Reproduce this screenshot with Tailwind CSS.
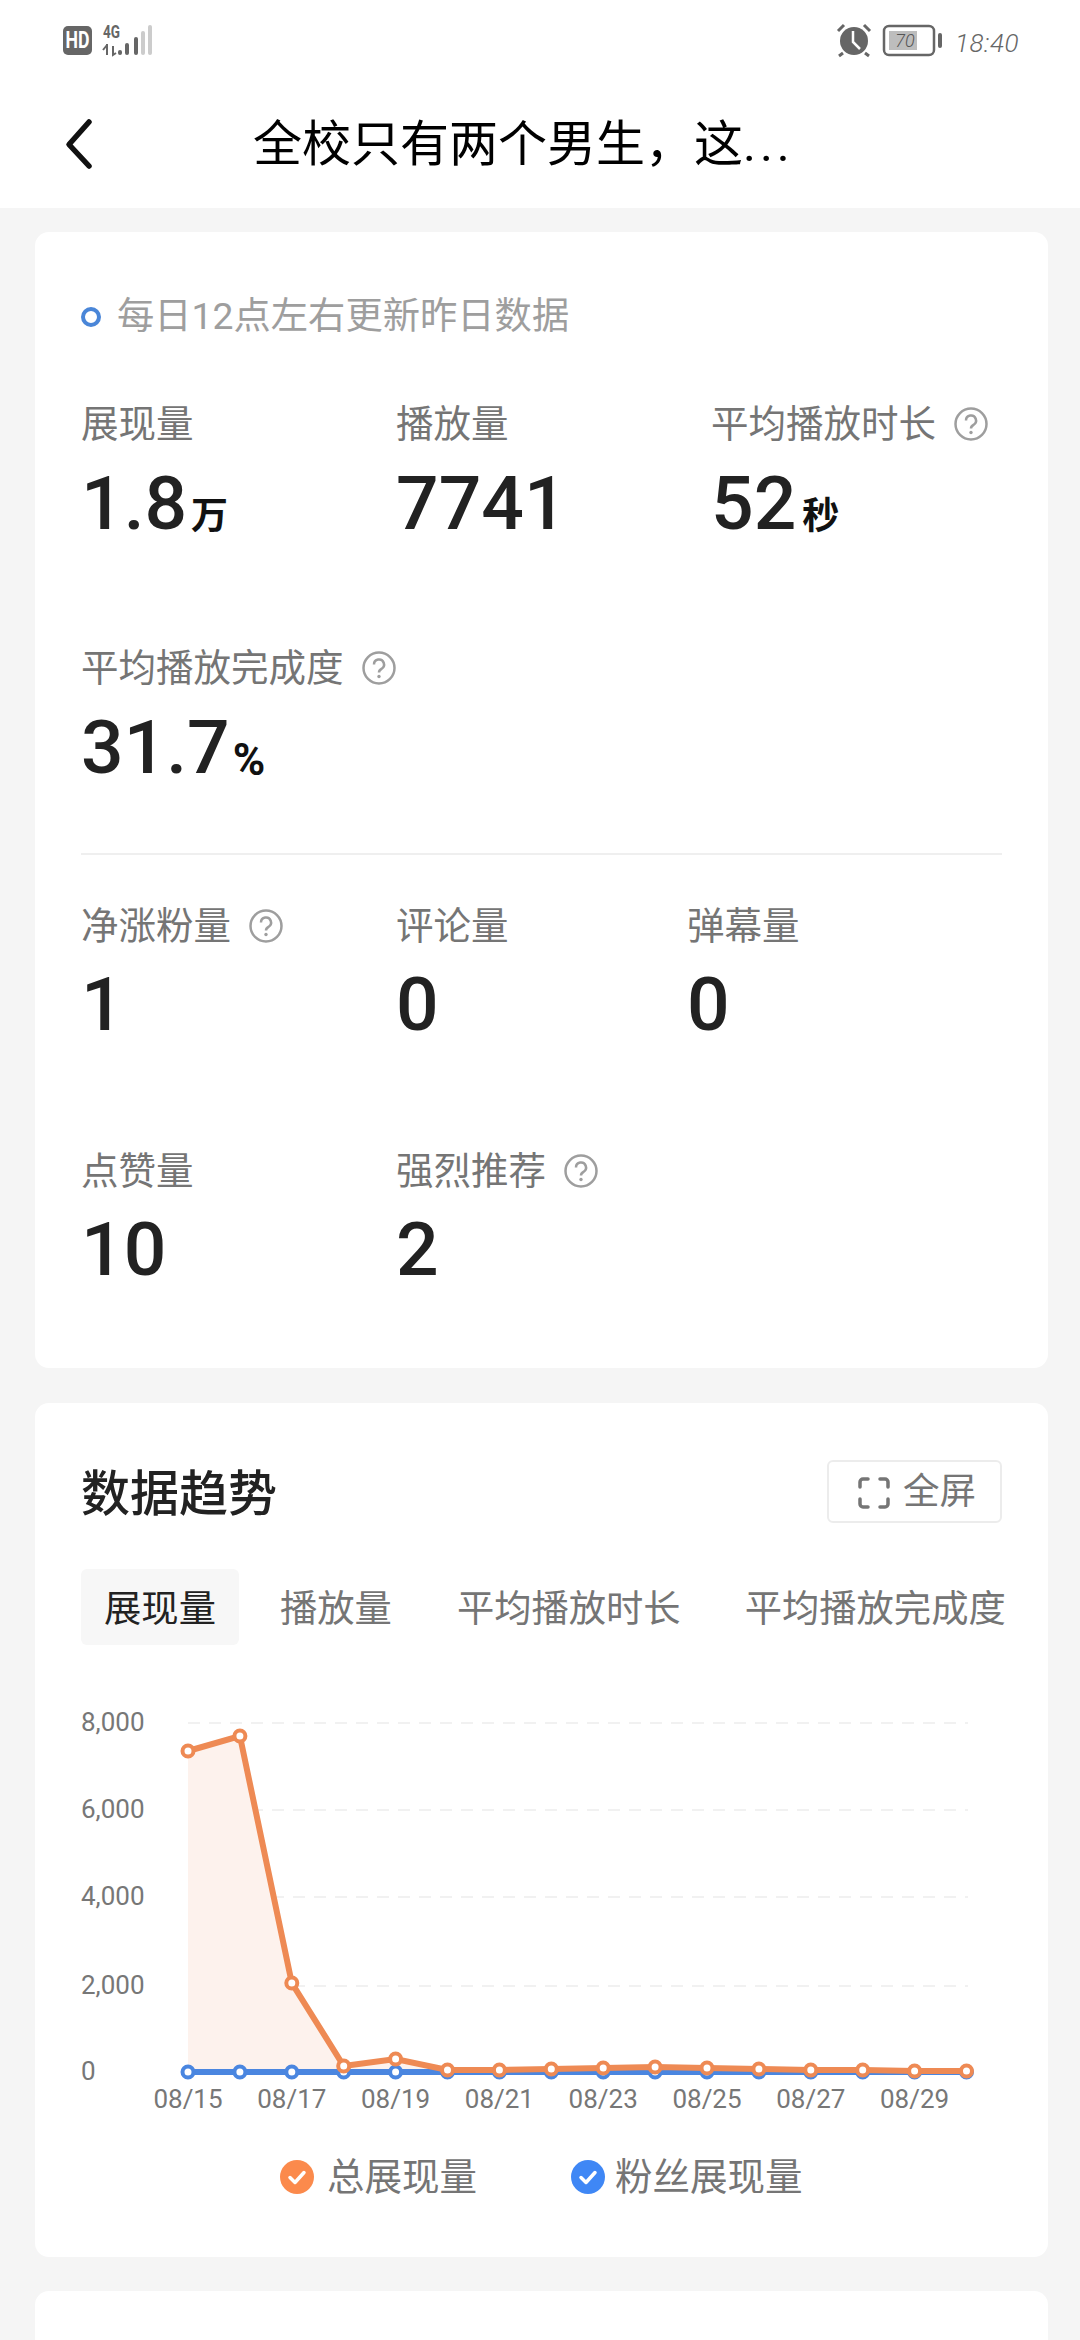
<!DOCTYPE html>
<html lang="zh-CN">
<head>
    <meta charset="UTF-8">
    <meta name="viewport" content="width=device-width, initial-scale=1.0">
    <title>数据详情</title>
    <script src="https://cdn.jsdelivr.net/npm/@tailwindcss/browser@4"></script>
</head>
<body class="bg-[#f5f5f5] font-['Roboto','Noto_Sans_CJK_SC',sans-serif]">
    <div class="w-[1080px] h-[2340px] overflow-hidden">
        <!-- Status bar and title -->
        <header class="bg-white h-[208px] relative">
            <svg class="absolute left-0 top-0" width="1080" height="70" viewBox="0 0 1080 70">
                <rect x="63" y="26" width="29" height="29" rx="5" fill="#666"/>
                <text x="65.500" y="48" font-size="23" font-weight="700" fill="#fff" textLength="24" lengthAdjust="spacingAndGlyphs" font-family="Roboto">HD</text>
                <text x="103" y="38" font-size="18" font-weight="700" fill="#666" textLength="17" lengthAdjust="spacingAndGlyphs" font-family="Roboto">4G</text>
                <path d="M107 44v11M103 50l4-5M113 46v9l3-2" stroke="#666" stroke-width="2" fill="none"/>
                <rect x="118" y="50" width="4" height="5" rx="2" fill="#666"/>
                <rect x="125" y="43" width="4" height="12" rx="2" fill="#666"/>
                <rect x="134" y="37" width="4" height="18" rx="2" fill="#666"/>
                <rect x="141" y="31" width="4" height="24" rx="2" fill="#ccc"/>
                <rect x="148" y="25" width="4" height="30" rx="2" fill="#ccc"/>
                <!-- alarm -->
                <circle cx="854" cy="41" r="14" fill="#666"/>
                <path d="M853 31v11l7 7" stroke="#fff" stroke-width="2.500" fill="none"/>
                <path d="M838 31l6-6M870 31l-6-6M843 53l-4 3M865 53l4 3" stroke="#666" stroke-width="3" fill="none"/>
                <!-- battery -->
                <rect x="884" y="26" width="50" height="29" rx="5" fill="none" stroke="#666" stroke-width="2.500"/>
                <rect x="889" y="31" width="28" height="19" fill="#bdbdbd"/>
                <rect x="938" y="33" width="4" height="15" rx="2" fill="#666"/>
                <text x="905" y="47" font-size="18" font-style="italic" font-weight="300" fill="#555" text-anchor="middle" font-family="Roboto">70</text>
                <text x="955" y="52" font-size="26" font-style="italic" font-weight="300" letter-spacing="0.500" fill="#666" font-family="Roboto">18:40</text>
            </svg>
            <svg class="absolute left-[60px] top-[115px]" width="40" height="60" viewBox="0 0 40 60">
                <path d="M29 7L9 29.500L29 51" stroke="#111" stroke-width="5.500" stroke-linecap="round" stroke-linejoin="round" fill="none"/>
            </svg>
            <h1 class="absolute left-[253px] top-[110px] text-[49px] leading-[70px] text-black font-normal whitespace-nowrap">全校只有两个男生，这<span class="tracking-[4px]">...</span></h1>
        </header>

        <main class="pl-[35px] pr-[32px]">
            <!-- Overview card -->
            <section class="mt-[24px] h-[1136px] bg-white rounded-[14px] pl-[46px] pr-[46px] pt-[60px]">
                <div class="flex items-center h-[50px] gap-[16px]">
                    <span class="w-[20px] h-[20px] rounded-full border-[4px] border-[#4a86d8]"></span>
                    <span class="text-[37.3px] text-[#9e9e9e]">每日12点左右更新昨日数据</span>
                </div>
                <div class="mt-[57px] grid grid-cols-[315px_315px_1fr] gap-y-[88px]">
                    <div>
                        <div class="h-[50px] flex items-center text-[37.5px] text-[#757575]">展现量</div>
                        <div class="h-[106px] pt-[3px] flex items-center gap-[4px] text-[#222]"><span class="text-[75px] font-medium">1.8</span><span class="text-[37px] font-bold mt-[26px] text-[#111]">万</span></div>
                    </div>
                    <div>
                        <div class="h-[50px] flex items-center text-[37.5px] text-[#757575]">播放量</div>
                        <div class="h-[106px] pt-[3px] flex items-center text-[75px] font-medium text-[#222]">7741</div>
                    </div>
                    <div>
                        <div class="h-[50px] flex items-center gap-[17px] text-[37.5px] text-[#757575]">平均播放时长
                            <svg width="36" height="36" viewBox="0 0 36 36"><circle cx="18" cy="18" r="15.500" fill="none" stroke="#9e9e9e" stroke-width="2.500"/><path d="M13 14.500a5 5 0 1 1 7.500 4.300c-1.800 1-2.500 1.700-2.500 3.700" fill="none" stroke="#9e9e9e" stroke-width="2.500"/><circle cx="18" cy="26.500" r="1.700" fill="#9e9e9e"/></svg>
                        </div>
                        <div class="h-[106px] pt-[3px] flex items-center gap-[6px] text-[#222]"><span class="text-[75px] font-medium">52</span><span class="text-[37px] font-bold mt-[26px] text-[#111]">秒</span></div>
                    </div>
                    <div class="col-span-3">
                        <div class="h-[50px] flex items-center gap-[17px] text-[37.5px] text-[#757575]">平均播放完成度
                            <svg width="36" height="36" viewBox="0 0 36 36"><circle cx="18" cy="18" r="15.500" fill="none" stroke="#9e9e9e" stroke-width="2.500"/><path d="M13 14.500a5 5 0 1 1 7.500 4.300c-1.800 1-2.500 1.700-2.500 3.700" fill="none" stroke="#9e9e9e" stroke-width="2.500"/><circle cx="18" cy="26.500" r="1.700" fill="#9e9e9e"/></svg>
                        </div>
                        <div class="h-[106px] pt-[3px] flex items-center gap-[3px] text-[#222]"><span class="text-[75px] font-medium">31.7</span><span class="text-[44px] font-bold mt-[25px] text-[#111]">%</span></div>
                    </div>
                </div>
                <div class="mt-[54px] border-t-2 border-[#efefef]"></div>
                <div class="mt-[46px] grid grid-cols-[315px_291px_1fr] gap-y-[91px]">
                    <div>
                        <div class="h-[50px] flex items-center gap-[17px] text-[37.5px] text-[#757575]">净涨粉量
                            <svg width="36" height="36" viewBox="0 0 36 36"><circle cx="18" cy="18" r="15.500" fill="none" stroke="#9e9e9e" stroke-width="2.500"/><path d="M13 14.500a5 5 0 1 1 7.500 4.300c-1.800 1-2.500 1.700-2.500 3.700" fill="none" stroke="#9e9e9e" stroke-width="2.500"/><circle cx="18" cy="26.500" r="1.700" fill="#9e9e9e"/></svg>
                        </div>
                        <div class="h-[104px] pt-[3px] flex items-center text-[75px] font-medium text-[#222]">1</div>
                    </div>
                    <div>
                        <div class="h-[50px] flex items-center text-[37.5px] text-[#757575]">评论量</div>
                        <div class="h-[104px] pt-[3px] flex items-center text-[75px] font-medium text-[#222]">0</div>
                    </div>
                    <div>
                        <div class="h-[50px] flex items-center text-[37.5px] text-[#757575]">弹幕量</div>
                        <div class="h-[104px] pt-[3px] flex items-center text-[75px] font-medium text-[#222]">0</div>
                    </div>
                    <div>
                        <div class="h-[50px] flex items-center text-[37.5px] text-[#757575]">点赞量</div>
                        <div class="h-[104px] pt-[3px] flex items-center text-[75px] font-medium text-[#222]">10</div>
                    </div>
                    <div class="col-span-2">
                        <div class="h-[50px] flex items-center gap-[17px] text-[37.5px] text-[#757575]">强烈推荐
                            <svg width="36" height="36" viewBox="0 0 36 36"><circle cx="18" cy="18" r="15.500" fill="none" stroke="#9e9e9e" stroke-width="2.500"/><path d="M13 14.500a5 5 0 1 1 7.500 4.300c-1.800 1-2.500 1.700-2.500 3.700" fill="none" stroke="#9e9e9e" stroke-width="2.500"/><circle cx="18" cy="26.500" r="1.700" fill="#9e9e9e"/></svg>
                        </div>
                        <div class="h-[104px] pt-[3px] flex items-center text-[75px] font-medium text-[#222]">2</div>
                    </div>
                </div>
            </section>

            <!-- Trend card -->
            <section class="mt-[35px] h-[854px] bg-white rounded-[14px] pt-[57px]">
                <div class="flex items-center justify-between h-[63px] pl-[46px] pr-[46px]">
                    <h2 class="text-[49px] font-medium text-[#222] pt-[6px]">数据趋势</h2>
                    <div class="w-[175px] h-[63px] flex items-center gap-[12px] pl-[28px] border-2 border-[#ececec] rounded-[6px] text-[36.5px] text-[#757575] pt-[2px]">
                        <svg width="34" height="34" viewBox="0 0 34 34"><path d="M11 3H6a3 3 0 0 0-3 3v5M23 3h5a3 3 0 0 1 3 3v5M11 31H6a3 3 0 0 1-3-3v-5M23 31h5a3 3 0 0 0 3-3v-5" fill="none" stroke="#757575" stroke-width="3.500" stroke-linecap="round"/></svg>
                        全屏
                    </div>
                </div>
                <div class="mt-[46px] ml-[46px] flex items-center h-[76px] text-[37.3px] text-[#757575] whitespace-nowrap">
                    <div class="w-[158px] h-[76px] flex items-center justify-center rounded-[6px] bg-[#f7f7f7] text-[#222] pt-[6px]">展现量</div>
                    <div class="ml-[41px] pt-[6px]">播放量</div>
                    <div class="ml-[65px] pt-[6px]">平均播放时长</div>
                    <div class="ml-[64px] pt-[6px]">平均播放完成度</div>
                </div>
                <svg id="chart" class="mt-[45px] block" width="1013" height="440" viewBox="35 1690 1013 440"></svg>
                <div class="mt-[22px] h-[50px] flex items-center text-[37.5px] text-[#757575]">
                    <svg class="ml-[245px]" width="34" height="34" viewBox="0 0 34 34"><circle cx="17" cy="17" r="17" fill="#fb8a4c"/><path d="M10 17.500l5 5 9-10" fill="none" stroke="#fff" stroke-width="3.500" stroke-linecap="round" stroke-linejoin="round"/></svg>
                    <span class="ml-[13px]">总展现量</span>
                    <svg class="ml-[94px]" width="34" height="34" viewBox="0 0 34 34"><circle cx="17" cy="17" r="17" fill="#3f87f5"/><path d="M10 17.500l5 5 9-10" fill="none" stroke="#fff" stroke-width="3.500" stroke-linecap="round" stroke-linejoin="round"/></svg>
                    <span class="ml-[10px]">粉丝展现量</span>
                </div>
            </section>

            <!-- Next card, cut off by the screen -->
            <section class="mt-[34px] h-[120px] bg-white rounded-[14px]"></section>
        </main>
    </div>

    <script>
        const NS = 'http://www.w3.org/2000/svg';
        const chart = document.getElementById('chart');

        function add(tag, attrs, text) {
            const el = document.createElementNS(NS, tag);
            for (const k in attrs) el.setAttribute(k, attrs[k]);
            if (text) el.textContent = text;
            chart.appendChild(el);
            return el;
        }

        const xAt = i => 188 + i * 51.9;
        const orange = [1751, 1736, 1983, 2066, 2059, 2070, 2070, 2069, 2068, 2067, 2068, 2069, 2070, 2070, 2071, 2071];
        const blue = orange.map(() => 2072);

        // Grid and y axis
        [['8,000', 1723], ['6,000', 1810], ['4,000', 1897], ['2,000', 1986]].forEach(([label, y]) => {
            add('line', { x1: 188, x2: 968, y1: y, y2: y, stroke: '#f1f1f1', 'stroke-width': 2, 'stroke-dasharray': '12 9' });
            add('text', { x: 81, y: y + 8, 'font-size': 26, fill: '#777' }, label);
        });
        add('text', { x: 81, y: 2080, 'font-size': 26, fill: '#777' }, '0');

        // x axis, every other day
        for (let i = 0; i < 15; i += 2) {
            add('text', { x: xAt(i), y: 2108, 'font-size': 26, fill: '#777', 'text-anchor': 'middle' }, '08/' + (15 + i));
        }

        // Area under the total line
        const linePts = orange.map((y, i) => xAt(i) + ',' + y).join(' ');
        add('polygon', { points: linePts + ' ' + xAt(15) + ',2072 188,2072', fill: '#fdf2ed' });

        function series(values, color) {
            add('polyline', { points: values.map((y, i) => xAt(i) + ',' + y).join(' '), fill: 'none', stroke: color, 'stroke-width': 6 });
            values.forEach((y, i) => add('circle', { cx: xAt(i), cy: y, r: 5.5, fill: '#fff', stroke: color, 'stroke-width': 4 }));
        }
        series(blue, '#4a86e0');
        series(orange, '#ee8a54');
    </script>
</body>
</html>
